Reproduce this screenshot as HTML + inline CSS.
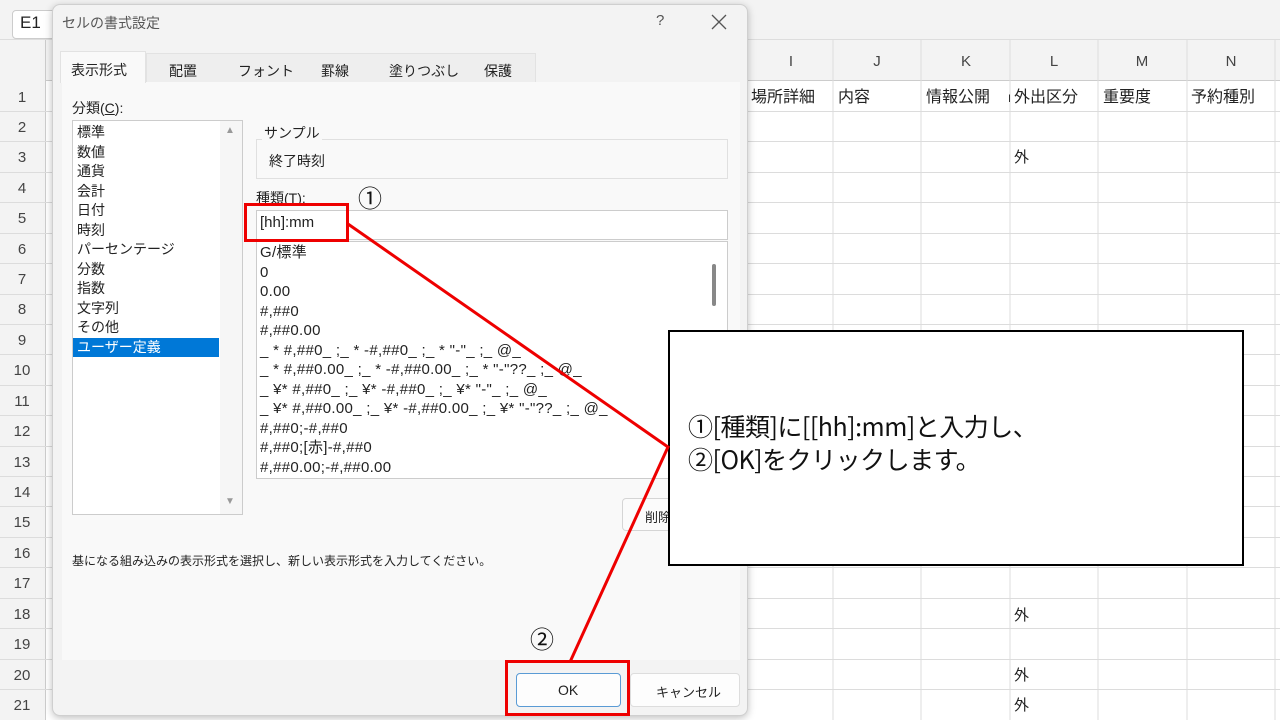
<!DOCTYPE html><html><head><meta charset="utf-8"><style>
*{margin:0;padding:0;box-sizing:border-box}
body{width:1280px;height:720px;overflow:hidden;background:#fff;position:relative;font-family:"Liberation Sans","Noto Sans CJK JP",sans-serif;color:#222}
.a{position:absolute;white-space:nowrap}
.s{font-size:14px}
</style></head><body>
<div class="a" style="left:0;top:0;width:1280px;height:40px;background:#f3f3f3;border-bottom:1px solid #ddd"></div>
<div class="a" style="left:12px;top:10px;width:60px;height:29px;background:#fff;border:1px solid #ccc;border-radius:4px"></div>
<div class="a" style="left:20px;top:13px;font-size:17px">E1</div>
<div class="a" style="left:0;top:40px;width:1280px;height:41px;background:#f3f3f3;border-bottom:1px solid #ccc"></div>
<div class="a" style="left:0;top:40px;width:46px;height:680px;background:#f3f3f3;border-right:1px solid #ccc"></div>
<svg class="a" style="left:0;top:0" width="1280" height="720">
<g stroke="#dcdcdc" stroke-width="1">
<line x1="833" y1="40" x2="833" y2="720"/><line x1="921" y1="40" x2="921" y2="720"/><line x1="1010" y1="40" x2="1010" y2="720"/><line x1="1098" y1="40" x2="1098" y2="720"/><line x1="1187" y1="40" x2="1187" y2="720"/><line x1="1275" y1="40" x2="1275" y2="720"/>
<line x1="0" y1="111.5" x2="1280" y2="111.5"/><line x1="0" y1="141.5" x2="1280" y2="141.5"/><line x1="0" y1="172.5" x2="1280" y2="172.5"/><line x1="0" y1="202.5" x2="1280" y2="202.5"/><line x1="0" y1="233.5" x2="1280" y2="233.5"/><line x1="0" y1="263.5" x2="1280" y2="263.5"/><line x1="0" y1="294.5" x2="1280" y2="294.5"/><line x1="0" y1="324.5" x2="1280" y2="324.5"/><line x1="0" y1="354.5" x2="1280" y2="354.5"/><line x1="0" y1="385.5" x2="1280" y2="385.5"/><line x1="0" y1="415.5" x2="1280" y2="415.5"/><line x1="0" y1="446.5" x2="1280" y2="446.5"/><line x1="0" y1="476.5" x2="1280" y2="476.5"/><line x1="0" y1="506.5" x2="1280" y2="506.5"/><line x1="0" y1="537.5" x2="1280" y2="537.5"/><line x1="0" y1="567.5" x2="1280" y2="567.5"/><line x1="0" y1="598.5" x2="1280" y2="598.5"/><line x1="0" y1="628.5" x2="1280" y2="628.5"/><line x1="0" y1="659.5" x2="1280" y2="659.5"/><line x1="0" y1="689.5" x2="1280" y2="689.5"/>
</g>
<g font-size="15" fill="#444" text-anchor="middle" font-family="Liberation Sans">
<text x="791" y="66">I</text><text x="877" y="66">J</text><text x="966" y="66">K</text><text x="1054" y="66">L</text><text x="1142" y="66">M</text><text x="1231" y="66">N</text>
<text x="22" y="102">1</text><text x="22" y="132">2</text><text x="22" y="162">3</text><text x="22" y="193">4</text><text x="22" y="223">5</text><text x="22" y="254">6</text><text x="22" y="284">7</text><text x="22" y="314">8</text><text x="22" y="345">9</text><text x="22" y="375">10</text><text x="22" y="406">11</text><text x="22" y="436">12</text><text x="22" y="467">13</text><text x="22" y="497">14</text><text x="22" y="527">15</text><text x="22" y="558">16</text><text x="22" y="588">17</text><text x="22" y="619">18</text><text x="22" y="649">19</text><text x="22" y="680">20</text><text x="22" y="710">21</text>
</g>
<g font-size="16" fill="#222" font-family="Noto Sans CJK JP">
<text x="751" y="102">場所詳細</text><text x="838" y="102">内容</text><text x="926" y="102">情報公開</text><text x="1008" y="102" font-size="10">I</text><text x="1014" y="102">外出区分</text><text x="1103" y="102">重要度</text><text x="1191" y="102">予約種別</text>
<text x="1014" y="162" font-size="15">外</text><text x="1014" y="620" font-size="15">外</text><text x="1014" y="680" font-size="15">外</text><text x="1014" y="710" font-size="15">外</text>
</g>
</svg>
<div class="a" style="left:52px;top:4px;width:696px;height:712px;background:#f3f3f3;border:1px solid #cfcfcf;border-radius:8px;box-shadow:0 2px 8px rgba(0,0,0,.25)"></div>
<div class="a" style="left:62px;top:13px;font-size:14px;color:#555">セルの書式設定</div>
<div class="a" style="left:656px;top:12px;font-size:15px;color:#555">?</div>
<svg class="a" style="left:711px;top:14px" width="16" height="16"><path d="M1 1L15 15M15 1L1 15" stroke="#555" stroke-width="1.3"/></svg>
<div class="a" style="left:62px;top:82px;width:678px;height:578px;background:#f9f9f9"></div>
<div class="a" style="left:60px;top:51px;width:86px;height:32px;background:#f9f9f9;border:1px solid #e2e2e2;border-bottom:none"></div>
<div class="a" style="left:146px;top:53px;width:390px;height:29px;background:#eeeeee;border:1px solid #e2e2e2;border-bottom:none"></div>
<div class="a s" style="left:71px;top:60px">表示形式</div>
<div class="a s" style="left:169px;top:61px">配置</div>
<div class="a s" style="left:238px;top:61px">フォント</div>
<div class="a s" style="left:321px;top:61px">罫線</div>
<div class="a s" style="left:389px;top:61px">塗りつぶし</div>
<div class="a s" style="left:484px;top:61px">保護</div>
<div class="a s" style="left:72px;top:98px">分類(<u>C</u>):</div>
<div class="a" style="left:72px;top:120px;width:171px;height:395px;background:#fff;border:1px solid #ccc"></div>
<div class="a" style="left:220px;top:121px;width:22px;height:393px;background:#f6f6f6"></div>
<div class="a" style="left:225px;top:125px;font-size:10px;color:#999">▲</div>
<div class="a" style="left:225px;top:496px;font-size:10px;color:#999">▼</div>
<div class="a" style="left:73px;top:338px;width:146px;height:19px;background:#0078d7"></div>
<div class="a s" style="left:77px;top:123px;line-height:19.5px">標準<br>数値<br>通貨<br>会計<br>日付<br>時刻<br>パーセンテージ<br>分数<br>指数<br>文字列<br>その他<br><span style="color:#fff">ユーザー定義</span></div>
<div class="a" style="left:256px;top:139px;width:472px;height:40px;border:1px solid #e0e0e0"></div>
<div class="a s" style="left:262px;top:123px;background:#f9f9f9;padding:0 2px">サンプル</div>
<div class="a s" style="left:269px;top:151px">終了時刻</div>
<div class="a s" style="left:256px;top:188px">種類(<u>T</u>):</div>
<div class="a" style="left:358px;top:179px;font-size:24px;color:#111;font-family:'Noto Sans CJK JP',sans-serif">①</div>
<div class="a" style="left:256px;top:210px;width:472px;height:30px;background:#fff;border:1px solid #ccc"></div>
<div class="a" style="left:260px;top:214px;font-size:15px">[hh]:mm</div>
<div class="a" style="left:256px;top:241px;width:472px;height:238px;background:#fff;border:1px solid #ccc"></div>
<div class="a" style="left:712px;top:264px;width:4px;height:42px;background:#888;border-radius:2px"></div>
<div class="a" style="left:260px;top:243px;font-size:15px;line-height:19.5px;letter-spacing:0.3px">G/標準<br>0<br>0.00<br>#,##0<br>#,##0.00<br>_ * #,##0_ ;_ * -#,##0_ ;_ * "-"_ ;_ @_<br>_ * #,##0.00_ ;_ * -#,##0.00_ ;_ * "-"??_ ;_ @_<br>_ ¥* #,##0_ ;_ ¥* -#,##0_ ;_ ¥* "-"_ ;_ @_<br>_ ¥* #,##0.00_ ;_ ¥* -#,##0.00_ ;_ ¥* "-"??_ ;_ @_<br>#,##0;-#,##0<br>#,##0;[赤]-#,##0<br>#,##0.00;-#,##0.00</div>
<div class="a" style="left:622px;top:498px;width:70px;height:33px;background:#fbfbfb;border:1px solid #d5d5d5;border-radius:4px"></div>
<div class="a" style="left:645px;top:507px;font-size:13px">削除</div>
<div class="a" style="left:72px;top:552px;font-size:12px">基になる組み込みの表示形式を選択し、新しい表示形式を入力してください。</div>
<div class="a" style="left:516px;top:673px;width:105px;height:34px;background:#fdfdfd;border:1px solid #5a9bd5;border-radius:4px"></div>
<div class="a" style="left:558px;top:682px;font-size:14px">OK</div>
<div class="a" style="left:630px;top:673px;width:110px;height:34px;background:#fdfdfd;border:1px solid #ddd;border-radius:4px"></div>
<div class="a" style="left:656px;top:682px;font-size:13px">キャンセル</div>
<div class="a" style="left:530px;top:620px;font-size:24px;color:#111;font-family:'Noto Sans CJK JP',sans-serif">②</div>
<div class="a" style="left:668px;top:330px;width:576px;height:236px;background:#fff;border:2px solid #000"></div>
<div class="a" style="left:688px;top:410px;font-size:25px;line-height:33px;color:#111;font-family:'Noto Sans CJK JP',sans-serif;letter-spacing:-0.5px">①[種類]に[[hh]:mm]と入力し、<br>②[OK]をクリックします。</div>
<svg class="a" style="left:0;top:0" width="1280" height="720">
<g fill="none" stroke="#e00" stroke-width="3">
<rect x="245.5" y="204.5" width="102" height="36"/>
<polyline points="348,224 668,447 570,662"/>
<rect x="506.5" y="661.5" width="122" height="53"/>
</g>
</svg>
</body></html>
